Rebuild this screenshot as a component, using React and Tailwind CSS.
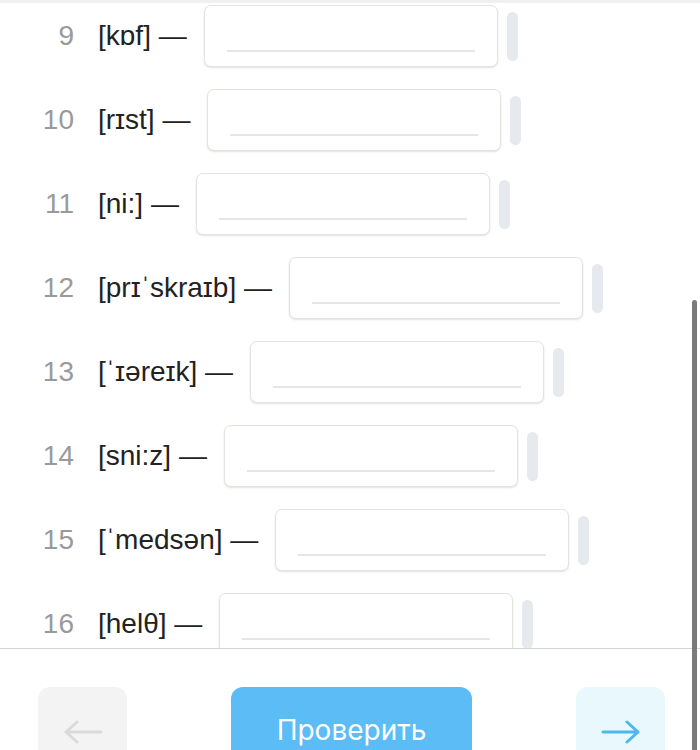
import React from 'react';

const rows = [
  { n: 9, word: '[kɒf]' },
  { n: 10, word: '[rɪst]' },
  { n: 11, word: '[ni:]' },
  { n: 12, word: '[prɪˈskraɪb]' },
  { n: 13, word: '[ˈɪəreɪk]' },
  { n: 14, word: '[sni:z]' },
  { n: 15, word: '[ˈmedsən]' },
  { n: 16, word: '[helθ]' },
];

const Row = ({ n, word }) => (
  <div className="flex items-center h-[84px] shrink-0">
    <span className="w-[74px] text-right text-[28px] text-[#9a9a9a]">{n}</span>
    <span className="ml-[24px] text-[28px] text-[#222]">{word} —</span>
    <div className="ml-[17px] w-[294px] h-[62px] rounded-[7px] border border-[#e4e4de] shadow-[0_1px_2px_rgba(0,0,0,0.12)] bg-white flex items-end px-[22px] pb-[14px]">
      <div className="w-full h-[2px] bg-[#e6e6e6]" />
    </div>
    <div className="ml-[9px] w-[11px] h-[49px] rounded-full bg-[#e6e9ed]" />
  </div>
);

export default function App() {
  return (
    <div className="relative h-[750px] w-[700px] overflow-hidden bg-white font-['Liberation_Sans',Arial,sans-serif]">
      <div className="relative z-10 h-[3px] bg-[#f0f0f0]" />
      <div className="h-[645px] overflow-hidden">
        <div className="flex flex-col -mt-[9px]">
          {rows.map((r) => (
            <Row key={r.n} {...r} />
          ))}
        </div>
      </div>
      <div className="h-[1px] bg-[#d4d4d4]" />
      <div className="flex items-start justify-between px-[38px] pt-[38px] pr-[35px]">
        <button className="w-[89px] h-[84px] rounded-[12px] bg-[#f3f3f3] flex items-center justify-center pt-[6px]">
          <svg width="40" height="24" viewBox="0 0 40 24" fill="none" stroke="#dadada" strokeWidth="3" strokeLinecap="round" strokeLinejoin="round">
            <path d="M38 12H3M14 2L3 12l11 10" />
          </svg>
        </button>
        <button className="w-[241px] h-[84px] rounded-[12px] bg-[#5bbcf6] text-white text-[28px] font-['Inter',sans-serif] pb-[2px] pt-[4px]">
          Проверить
        </button>
        <button className="w-[89px] h-[84px] rounded-[12px] bg-[#e8f8fd] flex items-center justify-center pt-[6px]">
          <svg width="40" height="24" viewBox="0 0 40 24" fill="none" stroke="#4fb6ef" strokeWidth="3" strokeLinecap="round" strokeLinejoin="round">
            <path d="M2 12h35M26 2l11 10-11 10" />
          </svg>
        </button>
      </div>
      <div className="absolute right-[3px] top-[300px] w-[5px] h-[460px] rounded-t-full bg-[#7a7a7a]" />
    </div>
  );
}
